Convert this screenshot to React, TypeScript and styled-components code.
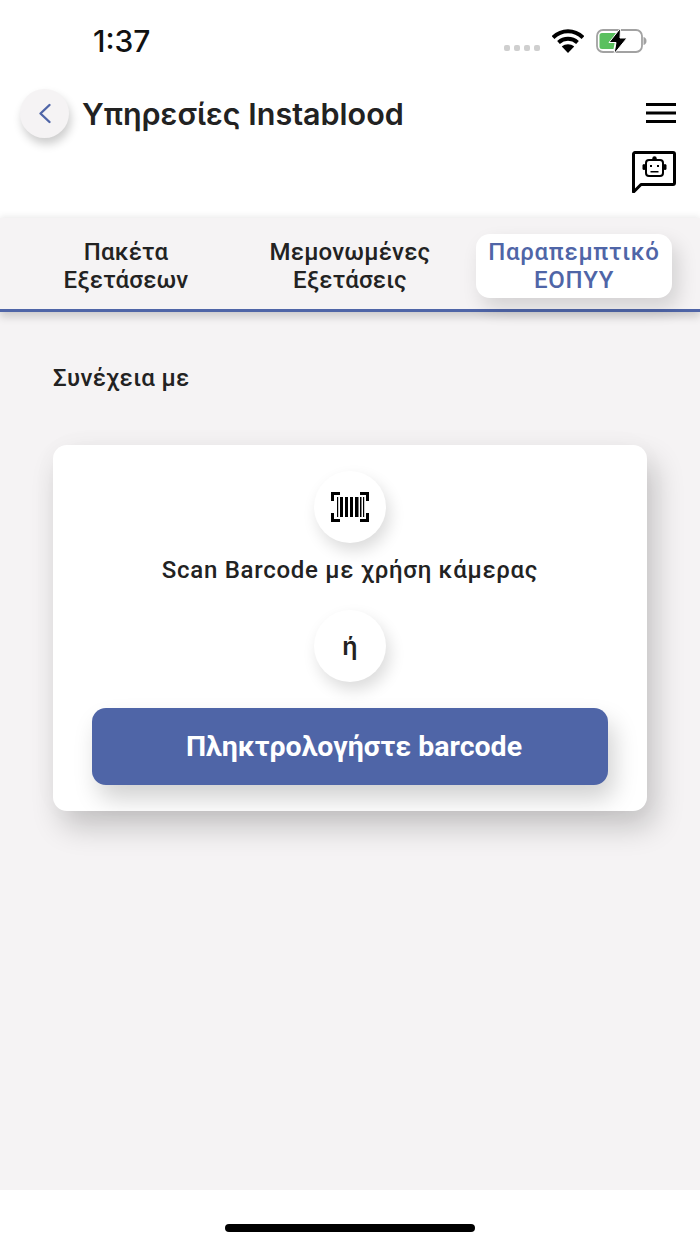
import React from "react";
import styled, { createGlobalStyle } from "styled-components";

const Global = createGlobalStyle`
  html, body { margin: 0; padding: 0; background: #fff; }
  * { box-sizing: border-box; }
  body { font-family: Roboto, "Noto Sans", sans-serif; }
`;

const Page = styled.div`
  width: 700px;
  height: 1244px;
  display: flex;
  flex-direction: column;
  overflow: hidden;
  background: #fff;
`;

const StatusBar = styled.div`
  height: 78px;
  flex: none;
  display: flex;
  align-items: center;
  justify-content: space-between;
  padding: 3px 53px 0 93px;
`;

const Time = styled.div`
  font-family: Inter, sans-serif;
  font-size: 30px;
  font-weight: 500;
  color: #111;
`;

const StatusIcons = styled.div`
  display: flex;
  align-items: center;
`;

const Header = styled.header`
  height: 140px;
  flex: none;
  display: grid;
  grid-template-columns: 1fr auto;
  padding: 11px 24px 0 20px;
  position: relative;
  z-index: 3;
`;

const TitleRow = styled.div`
  display: flex;
  align-items: center;
  align-self: start;
  gap: 13px;
`;

const BackButton = styled.div`
  width: 49px;
  height: 49px;
  border-radius: 50%;
  background: #f5f3f4;
  display: flex;
  align-items: center;
  justify-content: center;
  box-shadow: 2px 6px 10px rgba(0, 0, 0, 0.2);
`;

const Title = styled.h1`
  margin: 0;
  font-family: Inter, sans-serif;
  font-size: 30.5px;
  font-weight: 600;
  color: #222;
`;

const Actions = styled.div`
  display: flex;
  flex-direction: column;
  align-items: flex-end;
  gap: 28px;
  padding-top: 14px;
`;

const Tabs = styled.nav`
  height: 94px;
  flex: none;
  display: grid;
  grid-template-columns: 252px 196px 224px;
  padding: 16px 0 11px;
  background: #f5f3f4;
  border-bottom: 3px solid #4f65a7;
  box-shadow: 0 -3px 6px rgba(0, 0, 0, 0.05), 0 5px 8px rgba(0, 0, 0, 0.16);
  position: relative;
  z-index: 2;
`;

const Tab = styled.div<{ $active?: boolean }>`
  height: 64px;
  margin-left: ${(p) => (p.$active ? "28px" : "0")};
  display: flex;
  align-items: center;
  justify-content: center;
  text-align: center;
  font-size: 24px;
  line-height: 28px;
  font-weight: 500;
  letter-spacing: ${(p) => (p.$active ? "0.7px" : "0.2px")};
  border-radius: 14px;
  color: ${(p) => (p.$active ? "#4f65a7" : "#222")};
  background: ${(p) => (p.$active ? "#fff" : "transparent")};
  box-shadow: ${(p) => (p.$active ? "6px 10px 20px rgba(0,0,0,0.14)" : "none")};
`;

const Main = styled.main`
  flex: 1;
  background: #f5f3f4;
  padding: 51px 53px 0;
`;

const Label = styled.div`
  font-size: 24px;
  line-height: 30px;
  font-weight: 500;
  letter-spacing: 0.35px;
  color: #222;
`;

const Card = styled.section`
  margin-top: 52px;
  height: 366px;
  background: #fff;
  border-radius: 14px;
  box-shadow: 8px 16px 30px rgba(0, 0, 0, 0.2), 0 0 36px rgba(0, 0, 0, 0.02);
  padding: 26px 39px 0;
  display: flex;
  flex-direction: column;
  align-items: center;
`;

const Circle = styled.div`
  width: 72px;
  height: 72px;
  flex: none;
  border-radius: 50%;
  background: #fff;
  display: flex;
  align-items: center;
  justify-content: center;
  box-shadow: 4px 8px 16px rgba(0, 0, 0, 0.14);
  font-family: Inter, sans-serif;
  font-size: 25px;
  font-weight: 600;
  color: #222;
`;

const ScanText = styled.div`
  margin: 12px 0 25px;
  font-size: 24px;
  line-height: 30px;
  font-weight: 500;
  letter-spacing: 0.72px;
  color: #222;
`;

const ActionButton = styled.div`
  margin-top: 26px;
  width: 516px;
  height: 77px;
  flex: none;
  border-radius: 14px;
  background: #4f65a7;
  color: #fff;
  font-size: 28.5px;
  font-weight: 700;
  display: flex;
  align-items: center;
  justify-content: center;
  padding: 0 0 1px 8px;
  box-shadow: 6px 14px 24px rgba(0, 0, 0, 0.18);
`;

const Footer = styled.footer`
  height: 54px;
  flex: none;
  background: #fff;
  display: flex;
  justify-content: center;
  padding-top: 34px;
`;

const HomeBar = styled.div`
  width: 250px;
  height: 8px;
  border-radius: 4px;
  background: #000;
`;

const Signal = () => (
  <svg width="36" height="8" viewBox="0 0 36 8" style={{ marginTop: 14, marginRight: 12 }}>
    {[0, 10, 20, 30].map((x) => (
      <rect key={x} x={x} y="1" width="6" height="6" rx="2" fill="#cfcfcf" />
    ))}
  </svg>
);

const Wifi = () => (
  <svg width="32" height="24" viewBox="0 0 32 24" style={{ marginRight: 12 }}>
    <path d="M1 8.500C9.500 0 22.500 0 31 8.500" fill="none" stroke="#000" strokeWidth="4" />
    <path d="M6.500 13.500C12 8.600 20 8.600 25.500 13.500" fill="none" stroke="#000" strokeWidth="4" />
    <path d="M16 24 L9.800 17.400C13.500 14.400 18.500 14.400 22.200 17.400Z" fill="#000" />
  </svg>
);

const Battery = () => (
  <svg width="51" height="26" viewBox="0 0 51 26">
    <rect x="1" y="2" width="45" height="22" rx="6" fill="none" stroke="#a2a2a2" strokeWidth="1.800" />
    <path d="M47.500 9c2 .5 3 2 3 4s-1 3.500-3 4Z" fill="#a2a2a2" />
    <path d="M6 5h14l-4 8h3l-1.500 8H6a2.500 2.500 0 0 1-2.500-2.500v-11A2.500 2.500 0 0 1 6 5Z" fill="#5ac05f" />
    <path d="M24.500 0 L13 14.500 H20 L18 26 L31 10 H24 Z" fill="#000" stroke="#fff" strokeWidth="1" strokeLinejoin="round" />
  </svg>
);

const Chevron = () => (
  <svg width="14" height="22" viewBox="0 0 14 22">
    <path d="M11.500 2 L2.500 10.500 L11.500 19" fill="none" stroke="#4f65a7" strokeWidth="2.400" strokeLinecap="round" strokeLinejoin="round" />
  </svg>
);

const Menu = () => (
  <svg width="30" height="20" viewBox="0 0 30 20">
    <rect x="0" y="0" width="30" height="3" fill="#000" />
    <rect x="0" y="8.500" width="30" height="3" fill="#000" />
    <rect x="0" y="17" width="30" height="3" fill="#000" />
  </svg>
);

const Bot = () => (
  <svg width="44" height="42" viewBox="0 0 44 42">
    <path d="M3 1.500H41a1.500 1.500 0 0 1 1.500 1.500V32a1.500 1.500 0 0 1-1.500 1.500H9L1.500 41V3A1.500 1.500 0 0 1 3 1.500Z" fill="#fff" stroke="#000" strokeWidth="3" strokeLinejoin="round" />
    <rect x="14" y="9" width="17" height="16" rx="3" fill="none" stroke="#000" strokeWidth="2" />
    <circle cx="22.500" cy="7.500" r="2.200" fill="#000" />
    <rect x="10.500" y="13" width="3" height="6" rx="1.500" fill="#000" />
    <rect x="31.500" y="13" width="3" height="6" rx="1.500" fill="#000" />
    <rect x="18" y="14" width="2" height="2" fill="#000" />
    <rect x="25" y="14" width="2" height="2" fill="#000" />
    <rect x="18.500" y="20" width="8" height="1.500" fill="#000" />
  </svg>
);

const Barcode = () => (
  <svg width="38" height="30" viewBox="0 0 38 30">
    <path d="M1.500 9V1.500H9 M29 1.500H36.500V9 M1.500 21V28.500H9 M29 28.500H36.500V21" fill="none" stroke="#000" strokeWidth="3" />
    <g fill="#000">
      <rect x="6" y="5" width="1.200" height="20" />
      <rect x="9" y="5" width="3" height="20" />
      <rect x="14" y="5" width="3" height="20" />
      <rect x="19" y="5" width="3" height="20" />
      <rect x="24" y="5" width="3.500" height="20" />
      <rect x="29" y="5" width="1.500" height="20" />
      <rect x="32" y="5" width="1.200" height="20" />
    </g>
  </svg>
);

export default function App() {
  return (
    <Page>
      <Global />
      <StatusBar>
        <Time>1:37</Time>
        <StatusIcons>
          <Signal />
          <Wifi />
          <Battery />
        </StatusIcons>
      </StatusBar>
      <Header>
        <TitleRow>
          <BackButton>
            <Chevron />
          </BackButton>
          <Title>Υπηρεσίες Instablood</Title>
        </TitleRow>
        <Actions>
          <Menu />
          <Bot />
        </Actions>
      </Header>
      <Tabs>
        <Tab>
          Πακέτα
          <br />
          Εξετάσεων
        </Tab>
        <Tab>
          Μεμονωμένες
          <br />
          Εξετάσεις
        </Tab>
        <Tab $active>
          Παραπεμπτικό
          <br />
          ΕΟΠΥΥ
        </Tab>
      </Tabs>
      <Main>
        <Label>Συνέχεια με</Label>
        <Card>
          <Circle>
            <Barcode />
          </Circle>
          <ScanText>Scan Barcode με χρήση κάμερας</ScanText>
          <Circle>ή</Circle>
          <ActionButton>Πληκτρολογήστε barcode</ActionButton>
        </Card>
      </Main>
      <Footer>
        <HomeBar />
      </Footer>
    </Page>
  );
}
